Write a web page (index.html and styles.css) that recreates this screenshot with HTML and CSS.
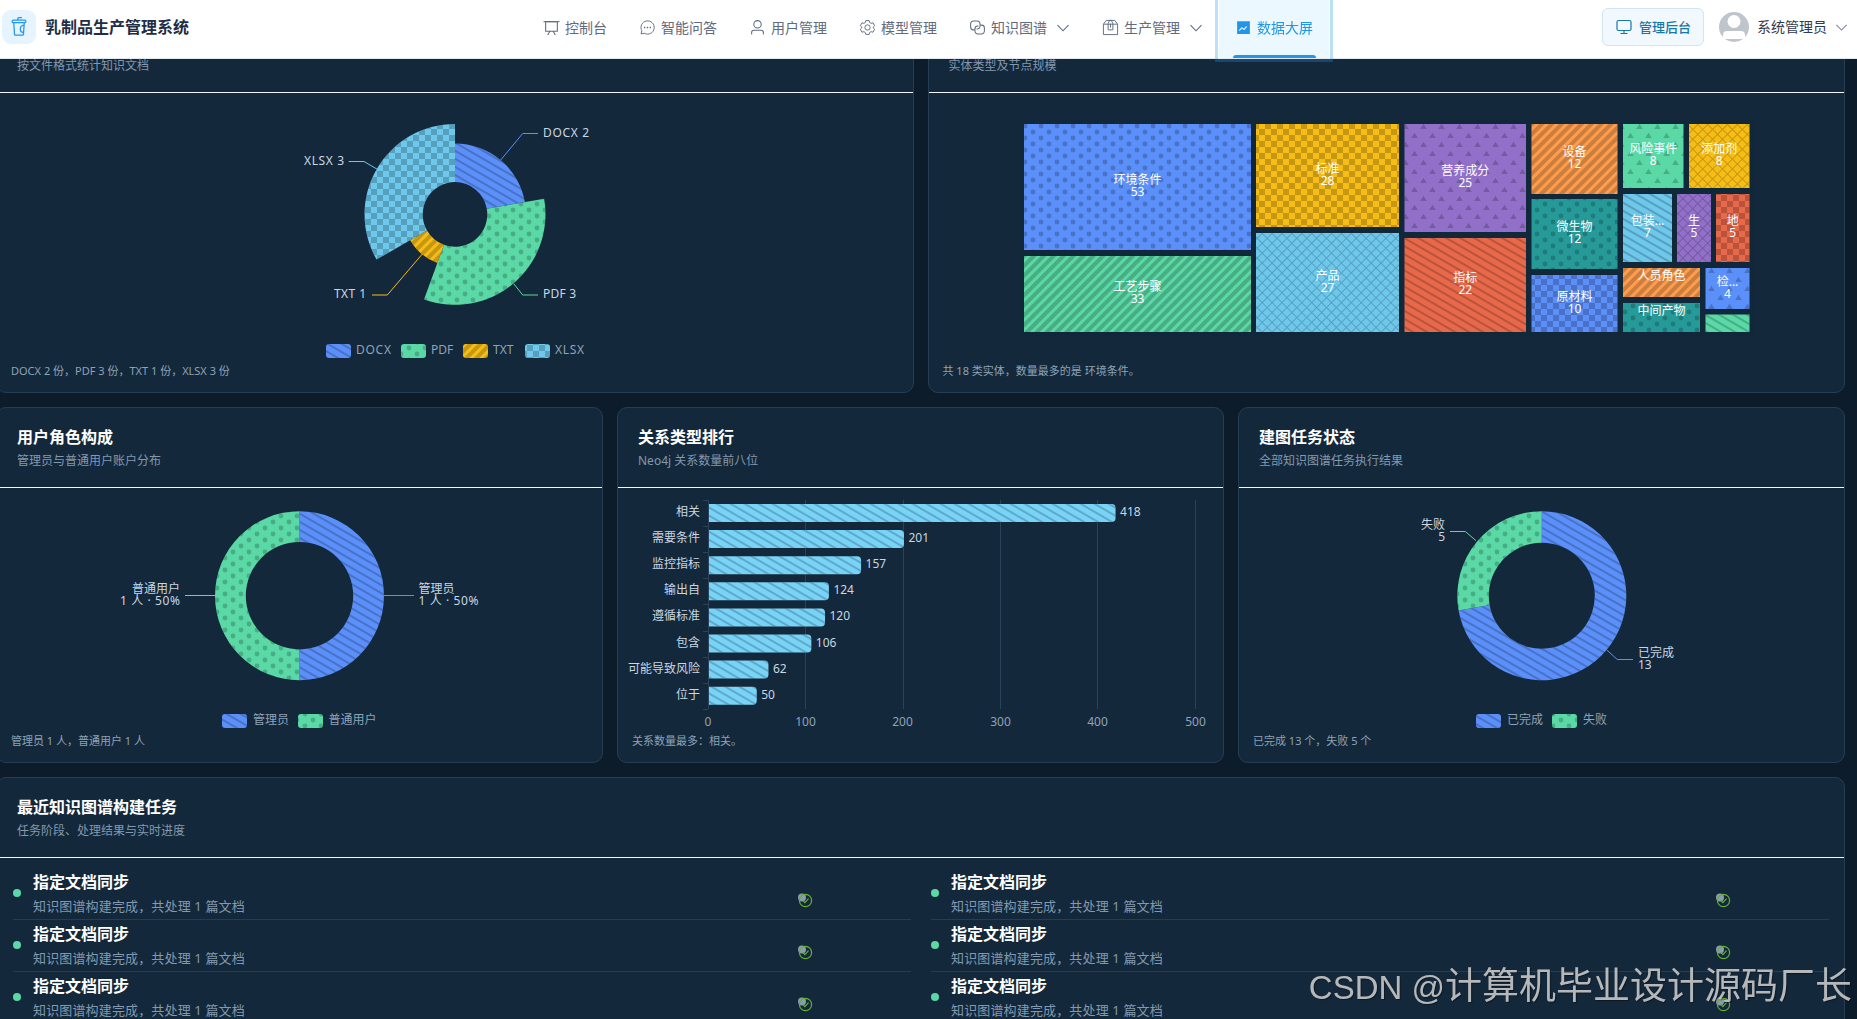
FILE: index.html
```
<!DOCTYPE html>
<html lang="zh-CN">
<head>
  <meta charset="UTF-8">
  <meta name="viewport" content="width=device-width, initial-scale=1">
  <title>乳制品生产管理系统</title>
  <link rel="stylesheet" href="styles.css">
</head>
<body>
  <!-- 图案与图标定义 -->
  <svg class="defs" width="0" height="0">
    <defs>
      <pattern id="lines" width="7" height="7" patternUnits="userSpaceOnUse" patternTransform="rotate(30)"><rect width="7" height="2" fill="rgba(0,0,0,.2)"/></pattern>
      <pattern id="stripes" width="7" height="7" patternUnits="userSpaceOnUse" patternTransform="rotate(-45)"><rect width="7" height="4" fill="rgba(0,0,0,.2)"/></pattern>
      <pattern id="dots" x="13" y="3" width="16" height="12" patternUnits="userSpaceOnUse"><circle cx="4" cy="3" r="2.4" fill="rgba(0,0,0,.2)"/><circle cx="12" cy="9" r="2.4" fill="rgba(0,0,0,.2)"/></pattern>
      <pattern id="checks" x="5" y="3" width="12" height="12" patternUnits="userSpaceOnUse"><path d="M0 0h6v6H0zM6 6h6v6H6z" fill="rgba(0,0,0,.2)"/></pattern>
      <pattern id="mesh" width="7" height="7" patternUnits="userSpaceOnUse" patternTransform="rotate(45)"><path d="M0 0h7v1H1v6H0z" fill="rgba(0,0,0,.2)"/></pattern>
      <pattern id="triangles" x="6" y="4" width="18" height="18" patternUnits="userSpaceOnUse"><path d="M1.2 8 4.5 2.8 7.8 8zM10.2 17l3.3-5.2 3.3 5.2z" fill="rgba(0,0,0,.2)"/></pattern>
      <symbol id="arrow" viewBox="0 0 14 14"><path d="M1.5 4.2 7 9.8l5.5-5.6" fill="none" stroke="currentColor" stroke-width="1.1"/></symbol>
      <symbol id="done" viewBox="0 0 16 16"><circle cx="5" cy="4.5" r="4" fill="#8b9bb0"/><circle cx="8.5" cy="7.5" r="6.1" fill="none" stroke="#62b32e" stroke-width="1.2"/><path d="m5.7 7.3 2.2 2.3 3.6-4" fill="none" stroke="#62b32e" stroke-width="1.2"/></symbol>
    </defs>
  </svg>

  <header class="header">
    <div class="brand">
      <span class="logo">
        <svg viewBox="0 0 1024 1024" width="20" height="20" fill="currentColor"><path d="M416 128V96a96 96 0 0 1 96-96h128a32 32 0 1 1 0 64H512a32 32 0 0 0-32 32v32h320a96 96 0 0 1 11.712 191.296l-39.68 581.056A64 64 0 0 1 708.224 960H315.776a64 64 0 0 1-63.872-59.648l-39.616-581.056A96 96 0 0 1 224 128zM276.48 320l39.296 576h392.448l4.8-70.784A224.064 224.064 0 0 1 544 608c0-117.248 90.112-213.376 204.8-223.04L747.52 320zM224 256h576a32 32 0 1 0 0-64H224a32 32 0 0 0 0 64m493.44 503.872 21.12-309.12a160 160 0 0 0-21.12 309.12"/></svg>
      </span>
      <h1>乳制品生产管理系统</h1>
    </div>
    <nav class="nav">
      <a class="nav-item"><svg viewBox="0 0 1024 1024" fill="currentColor"><path d="M32 128h960v64H32z"/><path d="M192 192v512h640V192zm-64-64h768v608a32 32 0 0 1-32 32H160a32 32 0 0 1-32-32z"/><path d="M322.176 960H248.32l144.64-250.56 55.424 32zm453.888 0h-73.856L576 741.44l55.424-32z"/></svg>控制台</a>
      <a class="nav-item"><svg viewBox="0 0 18 18" fill="none" stroke="currentColor"><path d="M2.2 15.8 3 12.4A7 7 0 1 1 5.7 15.1z"/><path d="M5.3 9h1.4M8.3 9h1.4M11.3 9h1.4" stroke-width="1.4"/></svg>智能问答</a>
      <a class="nav-item"><svg viewBox="0 0 1024 1024" fill="currentColor"><path d="M512 512a192 192 0 1 0 0-384 192 192 0 0 0 0 384m0 64a256 256 0 1 1 0-512 256 256 0 0 1 0 512m320 320v-96a96 96 0 0 0-96-96H288a96 96 0 0 0-96 96v96a32 32 0 1 1-64 0v-96a160 160 0 0 1 160-160h448a160 160 0 0 1 160 160v96a32 32 0 1 1-64 0"/></svg>用户管理</a>
      <a class="nav-item"><svg viewBox="0 0 18 18" fill="none" stroke="currentColor"><path d="M7.2 1.7h3.6l.5 2 1.5.9 2-.6 1.8 3.1-1.5 1.4v1l1.5 1.4-1.8 3.1-2-.6-1.5.9-.5 2H7.2l-.5-2-1.5-.9-2 .6-1.8-3.1 1.5-1.4v-1L1.4 7.1 3.2 4l2 .6 1.5-.9z"/><circle cx="9" cy="9" r="2.8"/></svg>模型管理</a>
      <a class="nav-item"><svg viewBox="0 0 18 18" fill="none" stroke="currentColor" stroke-width="1.1"><path d="M6 11.5H4.700a3 3 0 0 1-3-3V5.200a3 3 0 0 1 3-3h4a3 3 0 0 1 3 3v2.300a3 3 0 0 1-3 3H8"/><path d="M12 6.500h1.300a3 3 0 0 1 3 3v3.300a3 3 0 0 1-3 3h-4a3 3 0 0 1-3-3v-2.300a3 3 0 0 1 3-3H10"/></svg>知识图谱<svg class="caret"><use href="#arrow"/></svg></a>
      <a class="nav-item"><svg viewBox="0 0 18 18" fill="none" stroke="currentColor"><path d="M1.5 5.5h15v11h-15zM1.5 5.5 4.5 1.5h9l3 4"/><path d="M6.5 11.5V5L8 1.5h2L11.5 5v6.5z"/><path d="M9 5v4"/></svg>生产管理<svg class="caret"><use href="#arrow"/></svg></a>
      <a class="nav-item active"><svg viewBox="0 0 1024 1024" fill="currentColor"><path d="M128 896V128h768v768zm291.712-327.296 128 102.4 180.16-201.792-47.744-42.624-139.84 156.608-128-102.4-180.16 201.792 47.744 42.624z"/></svg>数据大屏</a>
    </nav>
    <div class="user">
      <button class="admin-btn"><svg viewBox="0 0 16 16" width="16" height="16" fill="none" stroke="currentColor" stroke-width="1.2"><rect x="1" y="1.5" width="14" height="10" rx="1.5"/><path d="M8 11.5v3M4.5 14.5h7"/></svg>管理后台</button>
      <svg class="avatar" viewBox="0 0 30 30"><circle cx="15" cy="15" r="15" fill="#c0c4cc"/><circle cx="15" cy="9.5" r="6.5" fill="#fff"/><path d="M4 26v-3q0-4 4-4h14q4 0 4 4v3q-1 1-3 1H7q-2 0-3-1z" fill="#fff"/></svg>
      <span>系统管理员</span>
      <svg class="user-caret"><use href="#arrow"/></svg>
    </div>
  </header>

  <main class="screen">
    <section class="row row-2">
      <article class="card">
        <div class="card-head"><h2>知识文档格式</h2><p>按文件格式统计知识文档</p></div>
        <svg class="chart" viewBox="-3 93 915.5 268" height="268">
          <path class="blue" d="M455 143.4A71 71 0 0 1 524.9 202.1L486.8 208.8A32.3 32.3 0 0 0 455 182.1z"/>
          <path class="lines" d="M455 143.4A71 71 0 0 1 524.9 202.1L486.8 208.8A32.3 32.3 0 0 0 455 182.1z"/>
          <path class="green" d="M544.1 198.7A90.5 90.5 0 0 1 424 299.4L444 244.8A32.3 32.3 0 0 0 486.8 208.8z"/>
          <path class="dots" d="M544.1 198.7A90.5 90.5 0 0 1 424 299.4L444 244.8A32.3 32.3 0 0 0 486.8 208.8z"/>
          <path class="yellow" d="M437.3 263A51.7 51.7 0 0 1 410.2 240.2L427 230.5A32.3 32.3 0 0 0 444 244.8z"/>
          <path class="stripes" d="M437.3 263A51.7 51.7 0 0 1 410.2 240.2L427 230.5A32.3 32.3 0 0 0 444 244.8z"/>
          <path class="sky" d="M376.6 259.6A90.5 90.5 0 0 1 455 123.9V182.1A32.3 32.3 0 0 0 427 230.5z"/>
          <path class="checks" d="M376.6 259.6A90.5 90.5 0 0 1 455 123.9V182.1A32.3 32.3 0 0 0 427 230.5z"/>
          <g class="leader">
            <path class="s-blue" d="M500.7 160 522.7 133.5H538"/>
            <path class="s-green" d="M513.7 283.7 522.7 295H538"/>
            <path class="s-yellow" d="M422.3 254 387.3 295H372"/>
            <path class="s-sky" d="M377.3 169.3 364 161.5H348.7"/>
          </g>
          <g class="label">
            <text x="543" y="137" textLength="46">DOCX 2</text><text x="543" y="298" textLength="33">PDF 3</text>
            <text x="366" y="298" class="end" textLength="32">TXT 1</text><text x="344" y="165" class="end" textLength="40">XLSX 3</text>
          </g>
          <g class="legend">
            <rect class="blue" x="326" y="344" width="25" height="14" rx="3"/><rect class="lines" x="326" y="344" width="25" height="14" rx="3"/><text x="356" y="354" textLength="35">DOCX</text>
            <rect class="green" x="401" y="344" width="25" height="14" rx="3"/><rect class="dots" x="401" y="344" width="25" height="14" rx="3"/><text x="431" y="354">PDF</text>
            <rect class="yellow" x="463" y="344" width="25" height="14" rx="3"/><rect class="stripes" x="463" y="344" width="25" height="14" rx="3"/><text x="493" y="354">TXT</text>
            <rect class="sky" x="525" y="344" width="25" height="14" rx="3"/><rect class="checks" x="525" y="344" width="25" height="14" rx="3"/><text x="555" y="354" textLength="29">XLSX</text>
          </g>
        </svg>
        <p class="summary">DOCX 2 份，PDF 3 份，TXT 1 份，XLSX 3 份</p>
      </article>

      <article class="card">
        <div class="card-head"><h2>知识图谱实体分布</h2><p>实体类型及节点规模</p></div>
        <svg class="chart" viewBox="929 93 915.5 268" height="268">
          <rect x="1019" y="120" width="735" height="216" fill="#11283b"/>
          <g id="treemap" class="treemap"></g>
        </svg>
        <p class="summary">共 18 类实体，数量最多的是 环境条件。</p>
      </article>
    </section>

    <section class="row row-3">
      <article class="card">
        <div class="card-head"><h2>用户角色构成</h2><p>管理员与普通用户账户分布</p></div>
        <svg class="chart" viewBox="-3 488 605 243" height="243">
          <path class="blue" d="M299.5 511.2A84.5 84.5 0 0 1 299.5 680.2V649.4A53.7 53.7 0 0 0 299.5 542z"/>
          <path class="lines" d="M299.5 511.2A84.5 84.5 0 0 1 299.5 680.2V649.4A53.7 53.7 0 0 0 299.5 542z"/>
          <path class="green" d="M299.5 680.2A84.5 84.5 0 0 1 299.5 511.2V542A53.7 53.7 0 0 0 299.5 649.4z"/>
          <path class="dots" d="M299.5 680.2A84.5 84.5 0 0 1 299.5 511.2V542A53.7 53.7 0 0 0 299.5 649.4z"/>
          <g class="leader"><path class="s-green" d="M185 595.5H215"/><path class="s-blue" d="M384 595.5H414"/></g>
          <g class="label">
            <text x="418.5" y="593">管理员</text><text x="418.5" y="605" textLength="60">1 人 · 50%</text>
            <text x="180" y="593" class="end">普通用户</text><text x="180" y="605" class="end" textLength="60">1 人 · 50%</text>
          </g>
          <g class="legend">
            <rect class="blue" x="222" y="714" width="25" height="14" rx="3"/><rect class="lines" x="222" y="714" width="25" height="14" rx="3"/><text x="253" y="724">管理员</text>
            <rect class="green" x="298" y="714" width="25" height="14" rx="3"/><rect class="dots" x="298" y="714" width="25" height="14" rx="3"/><text x="328.5" y="724">普通用户</text>
          </g>
        </svg>
        <p class="summary">管理员 1 人，普通用户 1 人</p>
      </article>

      <article class="card">
        <div class="card-head"><h2>关系类型排行</h2><p>Neo4j 关系数量前八位</p></div>
        <svg class="chart" viewBox="618 488 605 243" height="243">
          <path class="grid" d="M805.5 500V709M903.5 500V709M1000.5 500V709M1097.5 500V709M1195.5 500V709"/>
          <g id="bars" class="label"></g>
          <g class="legend mid">
            <text x="708" y="726">0</text><text x="805.5" y="726">100</text><text x="902.5" y="726">200</text>
            <text x="1000.5" y="726">300</text><text x="1097.5" y="726">400</text><text x="1195.5" y="726">500</text>
          </g>
        </svg>
        <p class="summary">关系数量最多：相关。</p>
      </article>

      <article class="card">
        <div class="card-head"><h2>建图任务状态</h2><p>全部知识图谱任务执行结果</p></div>
        <svg class="chart" viewBox="1239 488 605 243" height="243">
          <path class="blue" d="M1541.8 511.2A84.5 84.5 0 1 1 1458.6 610.4L1489.6 604.9A53 53 0 1 0 1541.8 542.7z"/>
          <path class="lines" d="M1541.8 511.2A84.5 84.5 0 1 1 1458.6 610.4L1489.6 604.9A53 53 0 1 0 1541.8 542.7z"/>
          <path class="green" d="M1458.6 610.4A84.5 84.5 0 0 1 1541.8 511.2V542.7A53 53 0 0 0 1489.6 604.9z"/>
          <path class="dots" d="M1458.6 610.4A84.5 84.5 0 0 1 1541.8 511.2V542.7A53 53 0 0 0 1489.6 604.9z"/>
          <g class="leader"><path class="s-green" d="M1476 540.7 1465.4 531.5H1450"/><path class="s-blue" d="M1606.8 650 1617.3 659.5H1633"/></g>
          <g class="label">
            <text x="1445" y="529" class="end">失败</text><text x="1445" y="541" class="end">5</text>
            <text x="1638" y="657">已完成</text><text x="1638" y="669">13</text>
          </g>
          <g class="legend">
            <rect class="blue" x="1476" y="714" width="25" height="14" rx="3"/><rect class="lines" x="1476" y="714" width="25" height="14" rx="3"/><text x="1507" y="724">已完成</text>
            <rect class="green" x="1552" y="714" width="25" height="14" rx="3"/><rect class="dots" x="1552" y="714" width="25" height="14" rx="3"/><text x="1583" y="724">失败</text>
          </g>
        </svg>
        <p class="summary">已完成 13 个，失败 5 个</p>
      </article>
    </section>

    <section class="card tasks">
      <div class="card-head"><h2>最近知识图谱构建任务</h2><p>任务阶段、处理结果与实时进度</p></div>
      <div class="task-list">
        <div class="task"><i class="dot"></i><div><h3>指定文档同步</h3><p>知识图谱构建完成，共处理 1 篇文档</p></div><svg class="state"><use href="#done"/></svg></div>
        <div class="task"><i class="dot"></i><div><h3>指定文档同步</h3><p>知识图谱构建完成，共处理 1 篇文档</p></div><svg class="state"><use href="#done"/></svg></div>
        <div class="task"><i class="dot"></i><div><h3>指定文档同步</h3><p>知识图谱构建完成，共处理 1 篇文档</p></div><svg class="state"><use href="#done"/></svg></div>
        <div class="task"><i class="dot"></i><div><h3>指定文档同步</h3><p>知识图谱构建完成，共处理 1 篇文档</p></div><svg class="state"><use href="#done"/></svg></div>
        <div class="task"><i class="dot"></i><div><h3>指定文档同步</h3><p>知识图谱构建完成，共处理 1 篇文档</p></div><svg class="state"><use href="#done"/></svg></div>
        <div class="task"><i class="dot"></i><div><h3>指定文档同步</h3><p>知识图谱构建完成，共处理 1 篇文档</p></div><svg class="state"><use href="#done"/></svg></div>
      </div>
    </section>
  </main>
  <div class="watermark"><span>CSDN @</span>计算机毕业设计源码厂长</div>
  <script src="charts.js"></script>
</body>
</html>
```
FILE: charts.js
```
// 矩形树图：名称、数量、x、y、宽、高、颜色、图案
const entities = [
  ['环境条件', 53, 1024, 124, 227, 126, 'blue', 'dots'],
  ['工艺步骤', 33, 1024, 256, 227, 76, 'green', 'stripes'],
  ['标准', 28, 1256, 124, 143, 103, 'yellow', 'checks'],
  ['产品', 27, 1256, 233, 143, 99, 'sky', 'mesh'],
  ['营养成分', 25, 1404.5, 124, 121.5, 108, 'purple', 'triangles'],
  ['指标', 22, 1404.5, 238, 121.5, 94, 'red', 'lines'],
  ['设备', 12, 1531.5, 124, 86, 70, 'orange', 'stripes'],
  ['微生物', 12, 1531.5, 199, 86, 70, 'teal', 'dots'],
  ['原材料', 10, 1531.5, 275, 86, 57, 'blue', 'checks'],
  ['风险事件', 8, 1623, 124, 60.5, 64, 'green', 'triangles'],
  ['添加剂', 8, 1689, 124, 60.5, 64, 'yellow', 'mesh'],
  ['包装...', 7, 1623, 194, 49, 68, 'sky', 'lines'],
  ['生', 5, 1677, 194, 34, 68, 'purple', 'mesh'],
  ['地', 5, 1716, 194, 33.5, 68, 'red', 'checks'],
  ['人员角色', '', 1623, 268, 77, 29, 'orange', 'stripes'],
  ['中间产物', '', 1623, 303, 77, 29, 'teal', 'dots'],
  ['检...', 4, 1705.5, 268, 44, 41, 'blue', 'triangles'],
  ['', '', 1705.5, 314.5, 44, 17.5, 'green', 'lines']
];

document.getElementById('treemap').innerHTML = entities.map(([name, count, x, y, w, h, color, decal]) => {
  const cx = x + w / 2;
  // 放不下两行时只显示名称
  const ty = count === '' ? y + 12 : y + h / 2 - 3;
  return `<rect class="${color}" x="${x}" y="${y}" width="${w}" height="${h}"/>
    <rect class="${decal}" x="${x}" y="${y}" width="${w}" height="${h}"/>
    <text x="${cx}" y="${ty}">${name}</text><text x="${cx}" y="${ty + 12}">${count}</text>`;
}).join('');

// 关系类型条形图
const relations = [['相关', 418], ['需要条件', 201], ['监控指标', 157], ['输出自', 124], ['遵循标准', 120], ['包含', 106], ['可能导致风险', 62], ['位于', 50]];
const left = 708;
let bars = '';
relations.forEach(([name, value], i) => {
  const y = 504 + i * 26.1;
  const w = value * 0.975;
  const d = `M${left} ${y}h${w - 4}q4 0 4 4v10q0 4-4 4H${left}z`;
  bars += `<path class="bar" d="${d}"/><path class="lines" d="${d}"/>
    <text class="end" x="700" y="${y + 12}">${name}</text>
    <text x="${left + w + 4.5}" y="${y + 12}">${value}</text>`;
});
let axis = 'M708.5 500V709';
for (let i = 0; i <= 8; i++) axis += `M703 ${Math.round(500 + i * 26.1) + 0.5}h5`;
document.getElementById('bars').innerHTML = bars + `<path class="grid" d="${axis}"/>`;
```
FILE: styles.css
```
* {
  box-sizing: border-box;
}
body {
  margin: 0;
  height: 1019px;
  overflow: hidden;
  background: #0d1c2b;
  font-family: "Noto Sans", "Noto Sans CJK SC", sans-serif;
}
h1, h2, h3, p {
  margin: 0;
}
.defs {
  position: absolute;
}

/* 顶部导航 */
.header {
  position: fixed;
  top: 0;
  left: 0;
  z-index: 10;
  display: flex;
  width: 100%;
  height: 59px;
  background: #fff;
  border-bottom: 1px solid #e4e9f0;
}
.brand {
  display: flex;
  align-items: center;
  gap: 9px;
  width: 527px;
  padding: 0 0 4px 2px;
}
.logo {
  display: flex;
  align-items: center;
  justify-content: center;
  width: 34px;
  height: 34px;
  border-radius: 9px;
  background: #e6f4ff;
  color: #2196f3;
}
.brand h1 {
  font-size: 16px;
  line-height: 24px;
  color: #1f2d45;
}
.nav {
  display: flex;
  height: 58px;
}
.nav-item {
  display: flex;
  align-items: center;
  padding: 0 16px 3px;
  font-size: 14px;
  line-height: 20px;
  color: #606b80;
  white-space: nowrap;
}
.nav-item svg {
  width: 17px;
  height: 17px;
  margin-right: 5px;
}
.nav-item .caret {
  width: 14px;
  height: 14px;
  margin: 0 0 0 9px;
}
.nav-item.active {
  position: relative;
  background: #ecf8ff;
  color: #2196e8;
  outline: 3px solid rgba(33, 150, 232, 0.3);
  outline-offset: 1px;
}
.nav-item.active::after {
  content: "";
  position: absolute;
  left: 14px;
  right: 13px;
  bottom: 0;
  height: 3px;
  border-radius: 3px 3px 0 0;
  background: #2196e8;
}
.user {
  display: flex;
  align-items: center;
  margin-left: auto;
  padding: 0 9px 4px 0;
  font-size: 14px;
  line-height: 20px;
  color: #2f3b52;
}
.admin-btn {
  display: flex;
  align-items: center;
  gap: 7px;
  width: 102px;
  height: 38px;
  margin-right: 15px;
  padding: 0 0 1px 13px;
  border: 1px solid #cfe4f5;
  border-radius: 6px;
  background: #f1f8fe;
  font: 500 13px "Noto Sans CJK SC", sans-serif;
  color: #1677a8;
}
.avatar {
  width: 30px;
  height: 30px;
  margin-right: 8px;
}
.user-caret {
  width: 13px;
  height: 13px;
  margin-left: 8px;
  color: #7c879a;
}

/* 大屏主体 */
.screen {
  display: flex;
  flex-direction: column;
  gap: 14px;
  width: 1849px;
  height: 1019px;
  margin-left: -4px;
  padding-top: 12px;
  overflow: hidden;
}
.row {
  display: grid;
  flex-shrink: 0;
  column-gap: 14px;
}
.row-2 {
  grid-template-columns: repeat(2, 1fr);
}
.row-3 {
  grid-template-columns: repeat(3, 1fr);
}
.card {
  background: #14283b;
  border: 1px solid #263e53;
  border-radius: 10px;
}
.row-2 .card {
  height: 381px;
}
.row-3 .card {
  height: 356px;
}
.card-head {
  height: 80px;
  padding: 17px 20px 0;
  border-bottom: 1px solid #f4f8fb;
}
.card-head h2 {
  font-size: 16px;
  line-height: 24px;
  color: #fff;
}
.card-head p {
  margin-top: 3px;
  font-size: 12px;
  line-height: 18px;
  color: #8299b0;
}
.chart {
  display: block;
  width: 100%;
}
.summary {
  padding-left: 14px;
  font-size: 11px;
  line-height: 20px;
  color: #8ea2b5;
}

/* 图表 */
.blue { fill: #5b8ff9; }
.green { fill: #5ad8a6; }
.yellow { fill: #f6bd16; }
.sky { fill: #6dc8ec; }
.purple { fill: #9270ca; }
.red { fill: #e8684a; }
.orange { fill: #ff9d4d; }
.teal { fill: #269a99; }
.bar { fill: #78d3f8; }
.lines { fill: url(#lines); }
.stripes { fill: url(#stripes); }
.dots { fill: url(#dots); }
.checks { fill: url(#checks); }
.mesh { fill: url(#mesh); }
.triangles { fill: url(#triangles); }
.leader path {
  fill: none;
}
.s-blue { stroke: #5b8ff9; }
.s-green { stroke: #5ad8a6; }
.s-yellow { stroke: #f6bd16; }
.s-sky { stroke: #6dc8ec; }
.grid {
  fill: none;
  stroke: #2b4358;
}
.chart text {
  font-size: 12px;
}
.label text {
  fill: #c9d7e3;
}
.label .end {
  text-anchor: end;
}
.legend text {
  fill: #8fa3b8;
}
.mid text {
  text-anchor: middle;
}
.treemap text {
  fill: #fff;
  text-anchor: middle;
}

/* 任务列表 */
.tasks {
  flex-shrink: 0;
  height: 400px;
}
.task-list {
  display: grid;
  grid-template-columns: 898px 898px;
  column-gap: 20px;
  padding: 10px 0 0 16px;
}
.task {
  display: flex;
  align-items: center;
  height: 52px;
  padding-bottom: 2px;
  border-bottom: 1px solid #263e53;
}
.dot {
  width: 8px;
  height: 8px;
  margin-right: 12px;
  border-radius: 50%;
  background: #5ad8a6;
}
.task h3 {
  padding-top: 2px;
  font-size: 16px;
  line-height: 24px;
  color: #fff;
}
.task p {
  margin-top: 1px;
  font-size: 13px;
  line-height: 22px;
  letter-spacing: 0.15px;
  color: #8299b0;
}
.state {
  width: 16px;
  height: 16px;
  margin: 17px 98px 0 auto;
}

.watermark {
  position: fixed;
  right: 5px;
  bottom: 3px;
  z-index: 20;
  font-size: 37px;
  line-height: 56px;
  white-space: nowrap;
  color: rgba(205, 205, 205, 0.88);
  text-shadow: 1px 1px 1px rgba(0, 0, 0, 0.4);
}
.watermark span {
  font-family: "Liberation Sans", sans-serif;
  font-size: 33px;
}
```
